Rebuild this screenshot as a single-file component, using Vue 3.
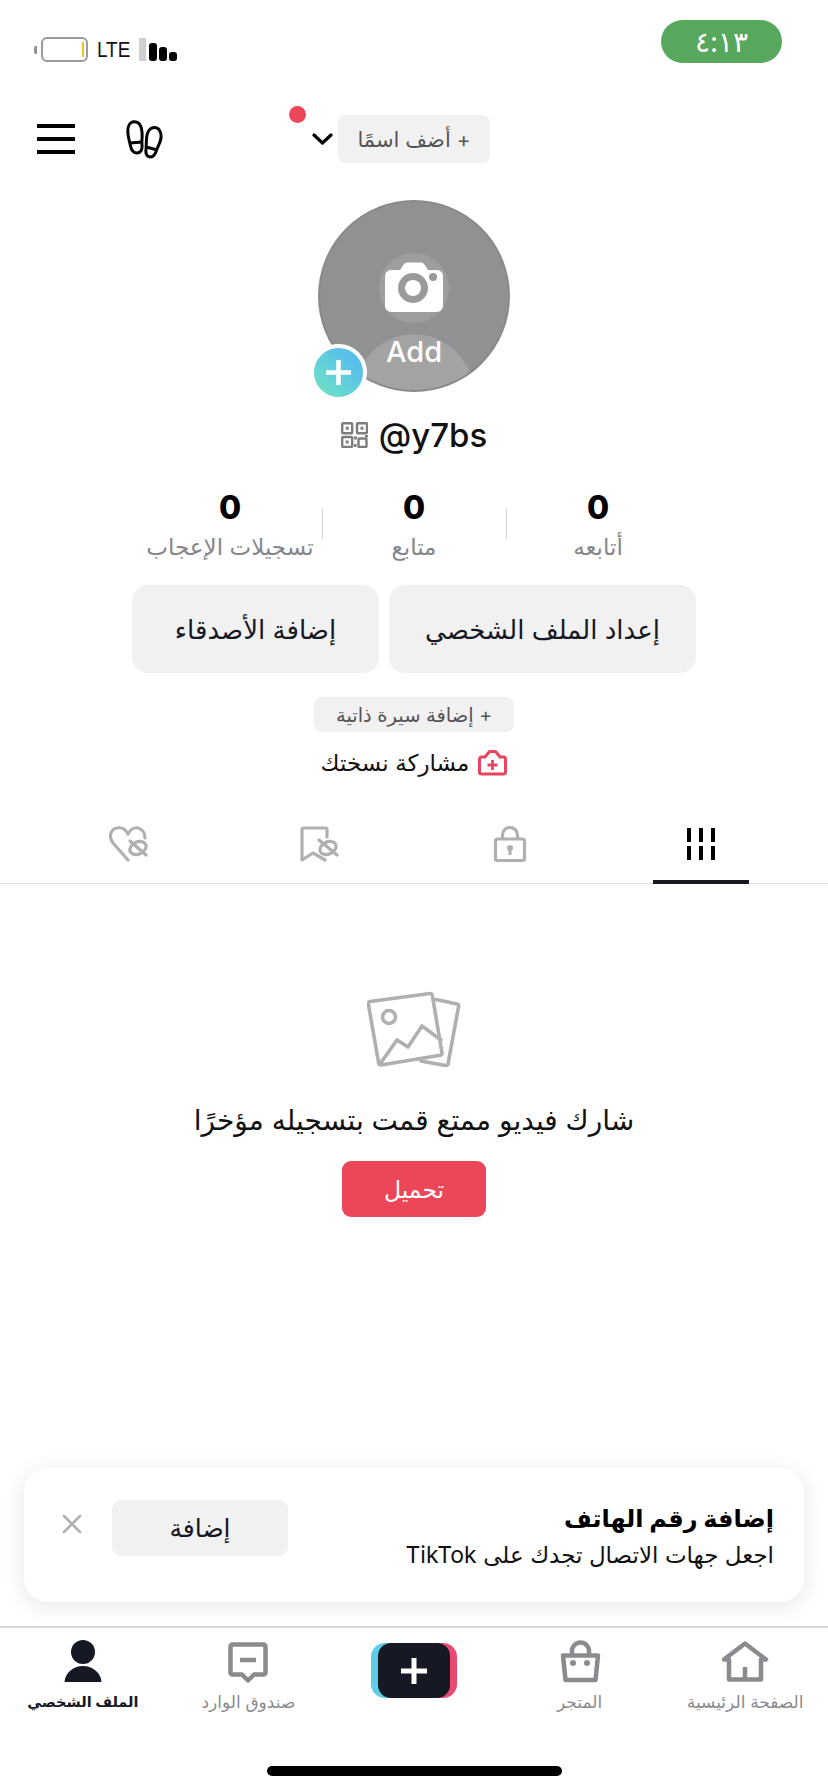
<template>
  <div class="screen">
    <div class="status-bar">
      <div class="status-left">
        <span class="batt-nub"></span>
        <span class="battery"><span class="batt-level"></span></span>
        <span class="lte">LTE</span>
        <span class="signal">
          <i class="sig sig-off"></i>
          <i class="sig sig-1"></i>
          <i class="sig sig-2"></i>
          <i class="sig sig-3"></i>
        </span>
      </div>
      <div class="time-pill">٤:١٣</div>
    </div>

    <div class="top-bar">
      <div class="burger"><i></i><i></i><i></i></div>
      <svg class="feet" width="37" height="39" viewBox="0 0 37 39" fill="none" stroke="#000" stroke-width="3" stroke-linejoin="round">
        <path d="M8 1.800C13 1.500 15.500 6 16 12C16.500 18 15.500 20 16 25C16.500 30 14.500 33 11 33C7.500 33 5.500 31 4.500 26C3.500 21 1.800 17 1.800 11C1.800 6 4 2 8 1.800Z" />
        <path d="M4 23L16 22" />
        <path d="M28.500 7.500C33 7.500 35.500 12 35 18C34.500 22 32.500 25 31 29C29.500 34 27.500 37.500 24 37C20.500 36.500 19.500 33 20 29C20.500 24 20 20 21 15C22 11 24.500 7.500 28.500 7.500Z" />
        <path d="M20 27L31.500 30" />
      </svg>
      <div class="name-wrap">
        <span class="name-dot"></span>
        <svg class="chevron" width="21" height="12" viewBox="0 0 21 12" fill="none" stroke="#000" stroke-width="3.200" stroke-linecap="round" stroke-linejoin="round">
          <path d="M2 2l8.500 8L19 2" />
        </svg>
        <div class="name-pill" dir="rtl">+ أضف اسمًا</div>
      </div>
    </div>

    <section class="profile">
      <div class="avatar">
        <span class="halo"></span>
        <span class="shoulders"></span>
        <svg class="camera" width="58" height="50" viewBox="0 0 58 50">
          <path fill="#fff" d="M6 8h9l4-6a3 3 0 0 1 2.500-1.500h15A3 3 0 0 1 39 2l4 6h9a6 6 0 0 1 6 6v30a6 6 0 0 1-6 6H6a6 6 0 0 1-6-6V14a6 6 0 0 1 6-6z" />
          <circle cx="28" cy="26" r="15" fill="#9a9a9a" />
          <circle cx="28" cy="26" r="8" fill="#fff" />
          <circle cx="48" cy="15" r="4" fill="#9a9a9a" />
        </svg>
        <span class="add-text">Add</span>
        <span class="avatar-badge">
          <svg width="25" height="25" viewBox="0 0 25 25" stroke="#fff" stroke-width="4.500"><path d="M12.500 0v25M0 12.500h25" /></svg>
        </span>
      </div>

      <div class="username">
        <svg width="27" height="26" viewBox="0 0 27 26" fill="none" stroke="#7d7d7d" stroke-width="2.400">
          <rect x="1.200" y="1.200" width="10" height="10" rx="1" />
          <rect x="16" y="1.200" width="10" height="10" rx="1" />
          <rect x="1.200" y="15" width="10" height="10" rx="1" />
          <rect x="17.500" y="16.500" width="8" height="8.500" rx="1" />
          <rect x="4.700" y="4.700" width="3" height="3" fill="#7d7d7d" stroke="none" />
          <rect x="19.500" y="4.700" width="3" height="3" fill="#7d7d7d" stroke="none" />
          <rect x="4.700" y="18.500" width="3" height="3" fill="#7d7d7d" stroke="none" />
          <rect x="13" y="14.500" width="3" height="3" fill="#7d7d7d" stroke="none" />
          <rect x="24" y="13" width="3" height="2.500" fill="#7d7d7d" stroke="none" />
          <rect x="13" y="22" width="2.500" height="3" fill="#7d7d7d" stroke="none" />
        </svg>
        <span class="handle">@y7bs</span>
      </div>

      <div class="stats">
        <template v-for="(s, i) in stats" :key="s.label">
          <span v-if="i > 0" class="stat-sep"></span>
          <div class="stat">
            <strong>{{ s.value }}</strong>
            <span dir="rtl">{{ s.label }}</span>
          </div>
        </template>
      </div>

      <div class="actions">
        <button class="btn btn-friends" dir="rtl">إضافة الأصدقاء</button>
        <button class="btn btn-edit" dir="rtl">إعداد الملف الشخصي</button>
      </div>

      <div class="bio" dir="rtl">+ إضافة سيرة ذاتية</div>

      <div class="share">
        <span class="share-text" dir="rtl">مشاركة نسختك</span>
        <svg width="29" height="26" viewBox="0 0 29 26" fill="none" stroke="#ea4560" stroke-width="3" stroke-linejoin="round">
          <path d="M1.500 9a2 2 0 0 1 2-2h3.500l4.500-5.500h6l4.500 5.500h3.500a2 2 0 0 1 2 2v13a2 2 0 0 1-2 2h-22a2 2 0 0 1-2-2z" />
          <path d="M14.500 10v10M9.500 15h10" stroke-width="2.800" />
        </svg>
      </div>
    </section>

    <nav class="tabs">
      <div class="tab">
        <svg width="40" height="36" viewBox="0 0 40 36" fill="none" stroke="#b0b0b0" stroke-width="3.200" stroke-linecap="round" stroke-linejoin="round">
          <path d="M20 34L5 17C0 10 3 3 9 2C14 1 18 4 20 8C22 4 26 1 30 2C34 3 37 7 37 12" />
          <ellipse cx="30" cy="22" rx="8.500" ry="6" transform="rotate(-25 30 22)" />
          <path d="M22 15L38 29" />
        </svg>
        <span class="tab-line"></span>
      </div>
      <div class="tab">
        <svg width="40" height="36" viewBox="0 0 40 36" fill="none" stroke="#b0b0b0" stroke-width="3.200" stroke-linecap="round" stroke-linejoin="round">
          <path d="M28 11V3.500a1.500 1.500 0 0 0-1.500-1.500H4.500A1.500 1.500 0 0 0 3 3.500V34l11-7 12 7" />
          <ellipse cx="29" cy="22" rx="8.500" ry="6" transform="rotate(-25 29 22)" />
          <path d="M20 14L38 29" />
        </svg>
        <span class="tab-line"></span>
      </div>
      <div class="tab">
        <svg width="40" height="36" viewBox="0 0 40 36" fill="none" stroke="#b0b0b0" stroke-width="3.200" stroke-linejoin="round">
          <rect x="5.500" y="13" width="29" height="21.500" rx="2" />
          <path d="M12.500 13V9a7.500 7.500 0 0 1 15 0v4" />
          <circle cx="20" cy="22" r="3" fill="#b0b0b0" stroke="none" />
          <path d="M20 22v7" />
        </svg>
        <span class="tab-line"></span>
      </div>
      <div class="tab tab-on">
        <svg width="40" height="36" viewBox="0 0 40 36" fill="#000">
          <rect x="6" y="2" width="4" height="14" />
          <rect x="18" y="2" width="4" height="14" />
          <rect x="30" y="2" width="4" height="14" />
          <rect x="6" y="20" width="4" height="14" />
          <rect x="18" y="20" width="4" height="14" />
          <rect x="30" y="20" width="4" height="14" />
        </svg>
        <span class="tab-line"></span>
      </div>
    </nav>

    <section class="empty">
      <svg width="94" height="76" viewBox="0 0 94 76" fill="none" stroke="#b0b0b0" stroke-width="3.600" stroke-linejoin="round" stroke-linecap="round">
        <path d="M3 10.500L63 2.500a2 2 0 0 1 2.300 1.700L75 62a2 2 0 0 1-1.700 2.300L14 74a2 2 0 0 1-2.300-1.700L1.300 12.800A2 2 0 0 1 3 10.500z" />
        <path d="M69 8.500L90 13a2 2 0 0 1 1.600 2.400L81 73a2 2 0 0 1-2.400 1.600L54 70" />
        <circle cx="22" cy="26" r="6.500" />
        <path d="M13 73L30 49L41 56L55 35L74 49" />
      </svg>
      <p class="empty-text" dir="rtl">شارك فيديو ممتع قمت بتسجيله مؤخرًا</p>
      <button class="upload" dir="rtl">تحميل</button>
    </section>

    <div class="spacer"></div>

    <div class="phone-card">
      <svg class="card-x" width="20" height="18" viewBox="0 0 20 18" stroke="#b0b0b0" stroke-width="2.600" stroke-linecap="round"><path d="M2 1l16 16M18 1L2 17" /></svg>
      <button class="card-btn" dir="rtl">إضافة</button>
      <div class="card-text" dir="rtl">
        <strong>إضافة رقم الهاتف</strong>
        <span>اجعل جهات الاتصال تجدك على TikTok</span>
      </div>
    </div>

    <footer class="bottom-nav">
      <div class="nav-row">
        <div class="nav-item nav-on">
          <svg width="50" height="44" viewBox="0 0 50 44" fill="#161823">
            <circle cx="25" cy="12" r="12" />
            <path d="M6.500 42C7 33 15 26 25 26C35 26 43 33 43.500 42Z" />
          </svg>
          <span dir="rtl">الملف الشخصي</span>
        </div>
        <div class="nav-item">
          <svg width="50" height="44" viewBox="0 0 50 44" fill="none" stroke="#8a8b8f" stroke-width="4.500" stroke-linejoin="round">
            <path d="M7.500 6.500a2 2 0 0 1 2-2h31a2 2 0 0 1 2 2v26a2 2 0 0 1-2 2h-9.500l-6 6-6-6H9.500a2 2 0 0 1-2-2z" />
            <path d="M17 20h16" />
          </svg>
          <span dir="rtl">صندوق الوارد</span>
        </div>
        <div class="nav-item">
          <div class="create">
            <div class="create-inner">
              <svg width="26" height="26" viewBox="0 0 26 26" stroke="#fff" stroke-width="5"><path d="M13 0v26M0 13h26" /></svg>
            </div>
          </div>
        </div>
        <div class="nav-item">
          <svg width="50" height="44" viewBox="0 0 50 44" fill="none" stroke="#8a8b8f" stroke-width="4.500" stroke-linejoin="round">
            <path d="M8 15.500h35L40.500 40h-30z" />
            <path d="M17 15v-4a8.500 8.500 0 0 1 17 0v4" />
            <circle cx="18" cy="23" r="3" fill="#8a8b8f" stroke="none" />
            <circle cx="32" cy="23" r="3" fill="#8a8b8f" stroke="none" />
          </svg>
          <span dir="rtl">المتجر</span>
        </div>
        <div class="nav-item">
          <svg width="50" height="44" viewBox="0 0 50 44" fill="none" stroke="#8a8b8f" stroke-width="4.500" stroke-linejoin="round">
            <path d="M4 19.500L25 3.500L46 19.500H41V39.500H9V19.500Z" />
            <path d="M25 27v12" />
          </svg>
          <span dir="rtl">الصفحة الرئيسية</span>
        </div>
      </div>
      <div class="home-bar"></div>
    </footer>
  </div>
</template>

<script setup>
const stats = [
  { value: 0, label: 'تسجيلات الإعجاب' },
  { value: 0, label: 'متابع' },
  { value: 0, label: 'أتابعه' }
]
</script>

<style>
html, body { margin: 0; background: #fff; }
</style>

<style scoped>
.screen {
  width: 828px;
  height: 1792px;
  display: flex;
  flex-direction: column;
  background: #fff;
  color: #161823;
  font-family: "Inter", "DejaVu Sans", sans-serif;
  overflow: hidden;
}

/* status bar */
.status-bar {
  height: 80px;
  box-sizing: border-box;
  padding: 20px 46px 0 34px;
  display: flex;
  justify-content: space-between;
  align-items: flex-start;
}
.status-left {
  display: flex;
  align-items: center;
  height: 25px;
  margin-top: 17px;
}
.batt-nub {
  width: 3px;
  height: 8px;
  background: #8f8f8f;
  border-radius: 2px 0 0 2px;
  margin-right: 4px;
}
.battery {
  width: 47px;
  height: 25px;
  box-sizing: border-box;
  border: 2px solid #9a9a9a;
  border-radius: 6px;
  display: flex;
  align-items: center;
  justify-content: flex-end;
  padding-right: 2px;
}
.batt-level { width: 2px; height: 15px; background: #f0c020; }
.lte {
  margin-left: 9px;
  width: 33px;
  font-family: "Liberation Sans", sans-serif;
  font-size: 22px;
  color: #111;
  transform: scaleX(0.86);
  transform-origin: left center;
}
.signal { display: flex; align-items: flex-end; height: 23px; gap: 2px; margin-left: 9px; }
.sig { display: block; width: 8px; border-radius: 3px; background: #000; }
.sig-off { width: 7px; height: 23px; background: #cfcfcf; border-radius: 0; margin-right: 1px; }
.sig-1 { height: 18px; }
.sig-2 { height: 14px; }
.sig-3 { height: 9px; }
.time-pill {
  width: 121px;
  height: 43px;
  border-radius: 22px;
  background: #57a85c;
  color: #fff;
  font-size: 28px;
  display: flex;
  align-items: center;
  justify-content: center;
}

/* top bar */
.top-bar {
  height: 118px;
  box-sizing: border-box;
  padding-left: 37px;
  display: flex;
  align-items: center;
}
.burger { width: 38px; display: flex; flex-direction: column; gap: 9px; }
.burger i { display: block; height: 4px; background: #000; }
.feet { margin-left: 51px; }
.name-wrap { position: relative; display: flex; align-items: center; margin-left: 149px; }
.name-dot {
  position: absolute;
  left: -23px;
  top: -9px;
  width: 17px;
  height: 17px;
  border-radius: 50%;
  background: #ec4659;
}
.name-pill {
  margin-left: 5px;
  width: 152px;
  height: 48px;
  border-radius: 8px;
  background: #f1f1f2;
  color: #555;
  font-size: 21px;
  display: flex;
  align-items: center;
  justify-content: center;
}

/* profile */
.profile { display: flex; flex-direction: column; align-items: center; margin-top: 2px; }
.avatar {
  position: relative;
  width: 192px;
  height: 192px;
  box-sizing: border-box;
  border: 2px solid #8a8a8a;
  border-radius: 50%;
  background: #909192;
}
.halo {
  position: absolute;
  left: 59px;
  top: 51px;
  width: 70px;
  height: 70px;
  border-radius: 50%;
  background: rgba(255, 255, 255, 0.12);
}
.shoulders {
  position: absolute;
  inset: 0;
  border-radius: 50%;
  background: radial-gradient(ellipse 62px 66px at 50% 198px, #a3a3a3 99%, transparent 100%);
}
.camera { position: absolute; left: 65px; top: 60px; }
.add-text {
  position: absolute;
  left: 0;
  right: 0;
  top: 130px;
  text-align: center;
  color: #fff;
  font-size: 29px;
  line-height: 40px;
  font-weight: 500;
}
.avatar-badge {
  position: absolute;
  left: -10px;
  top: 142px;
  width: 49px;
  height: 49px;
  border: 4px solid #fff;
  border-radius: 50%;
  background: linear-gradient(45deg, #70e6c2, #50b4f6);
  display: flex;
  align-items: center;
  justify-content: center;
}
.username { display: flex; align-items: center; gap: 11px; margin-top: 27px; height: 32px; }
.handle { font-size: 33px; font-weight: 500; color: #111; line-height: 32px; }

.stats { display: flex; margin-top: 38px; }
.stat { width: 183px; display: flex; flex-direction: column; align-items: center; }
.stat strong { font-size: 32px; font-weight: 800; line-height: 38px; color: #000; }
.stat span { margin-top: 5px; font-size: 23px; line-height: 30px; color: #85868c; white-space: nowrap; }
.stat-sep { width: 1px; height: 31px; margin-top: 19px; background: #d5d5d7; }

.actions { display: flex; gap: 10px; margin-top: 23px; }
.btn {
  height: 88px;
  border: none;
  border-radius: 16px;
  background: #f1f1f2;
  color: #161823;
  font-family: inherit;
  font-size: 26px;
}
.btn-friends { width: 247px; }
.btn-edit { width: 307px; }

.bio {
  margin-top: 24px;
  width: 200px;
  height: 35px;
  border-radius: 8px;
  background: #f1f1f2;
  color: #555;
  font-size: 19.500px;
  display: flex;
  align-items: center;
  justify-content: center;
}
.share { display: flex; align-items: center; gap: 9px; margin-top: 18px; height: 26px; }
.share-text { font-size: 23px; color: #111; }

/* tabs */
.tabs {
  display: flex;
  padding: 0 32px;
  margin-top: 50px;
  border-bottom: 1px solid #e0e0e1;
}
.tab { flex: 1; display: flex; flex-direction: column; align-items: center; }
.tab svg { display: block; }
.tab-line { width: 96px; height: 4px; margin-top: 18px; margin-bottom: -1px; }
.tab-on .tab-line { background: #161823; }

/* empty state */
.empty { display: flex; flex-direction: column; align-items: center; margin-top: 107px; }
.empty svg { display: block; }
.empty-text { margin: 33px 0 0; font-size: 28px; line-height: 40px; color: #111; white-space: nowrap; }
.upload {
  margin-top: 21px;
  width: 144px;
  height: 56px;
  border: none;
  border-radius: 9px;
  background: #ec4659;
  color: #fff;
  font-family: inherit;
  font-size: 23.500px;
}
.spacer { flex: 1; }

/* phone card */
.phone-card {
  margin: 0 24px 24px;
  height: 134px;
  box-sizing: border-box;
  padding: 32px 30px 0 38px;
  background: #fff;
  border-radius: 24px;
  box-shadow: 0 4px 22px rgba(0, 0, 0, 0.1);
  display: flex;
  align-items: flex-start;
}
.card-x { margin-top: 15px; }
.card-btn {
  margin-left: 30px;
  width: 176px;
  height: 56px;
  border: none;
  border-radius: 9px;
  background: #f1f1f2;
  color: #161823;
  font-family: inherit;
  font-size: 25px;
}
.card-text { margin-left: auto; margin-top: 1px; display: flex; flex-direction: column; }
.card-text strong { font-size: 24px; line-height: 36px; color: #000; }
.card-text span { font-size: 23px; line-height: 36px; color: #111; }

/* bottom nav */
.bottom-nav {
  height: 166px;
  box-sizing: border-box;
  border-top: 2px solid #d8d8d9;
  display: flex;
  flex-direction: column;
}
.nav-row { display: flex; padding-top: 12px; }
.nav-item { flex: 1; display: flex; flex-direction: column; align-items: center; }
.nav-item svg { display: block; }
.nav-item span { margin-top: 5px; font-size: 17px; line-height: 26px; color: #8a8b8f; white-space: nowrap; }
.nav-on span { color: #161823; font-size: 14.500px; font-weight: 700; }
.create {
  margin-top: 3px;
  width: 86px;
  height: 55px;
  border-radius: 14px;
  background: linear-gradient(90deg, #5fcde8 50%, #e94a72 50%);
  display: flex;
  justify-content: center;
}
.create-inner {
  width: 72px;
  height: 55px;
  border-radius: 13px;
  background: #161823;
  display: flex;
  align-items: center;
  justify-content: center;
}
.home-bar {
  width: 295px;
  height: 10px;
  margin: 51px auto 0;
  border-radius: 5px;
  background: #000;
}
</style>
